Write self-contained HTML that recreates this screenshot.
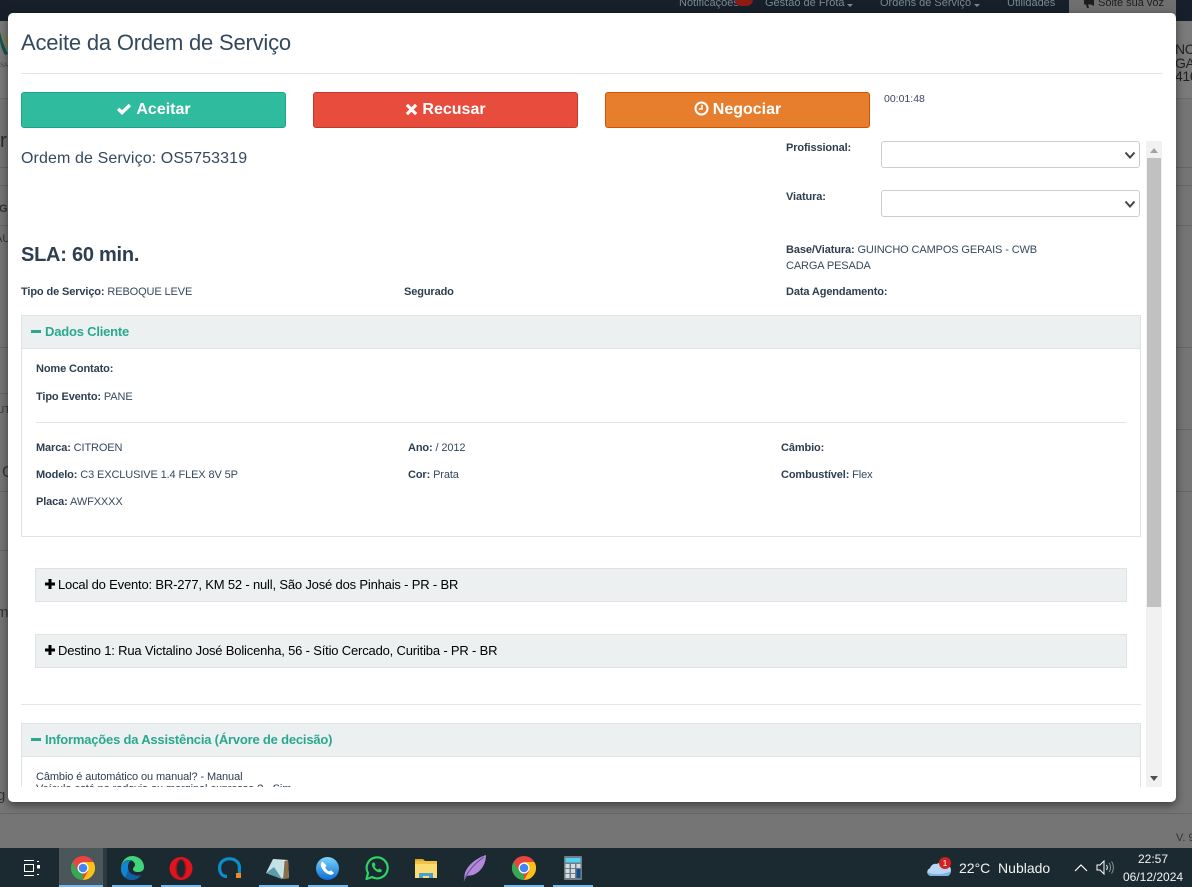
<!DOCTYPE html>
<html lang="pt"><head><meta charset="utf-8"><title>Aceite da Ordem de Serviço</title>
<style>
*{box-sizing:border-box}
html,body{margin:0;padding:0;width:1192px;height:887px;overflow:hidden;background:#757575;font-family:"Liberation Sans",sans-serif;color:#2c3e50}
.a{position:absolute;white-space:nowrap}
.t{font-size:11px;line-height:14px;color:#34495e;letter-spacing:-.12px;transform:translateY(1px)}
.t b{color:#2c3e50}
.btn{position:absolute;top:92px;height:36px;border-radius:3px;color:#fff;font-weight:bold;font-size:16px;display:flex;align-items:center;justify-content:center;gap:4px;border:1px solid}
.btn svg{transform:translateY(-1px)}
.sel{position:absolute;left:881px;width:259px;height:27px;border:1px solid #ccc;border-radius:3px;background:#fff}
.sel svg{position:absolute;right:3px;top:9px}
.ph{position:absolute;background:#ecf0f1;border:1px solid #e0e3e4}
.g{font-size:13px;font-weight:bold;color:#2aa88f;line-height:16px;letter-spacing:-.2px}
.k{font-size:13px;color:#000;line-height:16px;letter-spacing:-.18px}
.bg{position:absolute;color:#333;font-size:11px;white-space:nowrap}
.nav{position:absolute;top:-3px;font-size:11px;line-height:13px;color:#7a8690;white-space:nowrap}
.car{position:absolute;top:4px;width:0;height:0;border:3px solid transparent;border-bottom:0;border-top:3px solid #7a8690}
.line{position:absolute;height:1px;background:#676767}
.ul{position:absolute;bottom:0;height:2px;background:#76b9ed;width:35px}
.ic{position:absolute;top:853px}
</style></head><body>

<!-- background page -->
<div class="a" style="left:0;top:0;width:1192px;height:21px;background:#17202a"></div>
<div class="a" style="left:0;top:21px;width:1192px;height:77px;background:#7a7a7a"></div>
<div class="nav" style="left:679px">Notificações</div>
<div class="a" style="left:735px;top:-7px;width:18px;height:13px;border-radius:7px;background:#8c1c13"></div>
<div class="nav" style="left:765px">Gestão de Frota</div><div class="car" style="left:847px"></div>
<div class="nav" style="left:880px">Ordens de Serviço</div><div class="car" style="left:974px"></div>
<div class="nav" style="left:1007px">Utilidades</div>
<div class="a" style="left:1069px;top:0;width:107px;height:21px;background:#6f6f6f"></div>
<svg class="a" style="left:1083px;top:0" width="13" height="8" viewBox="0 0 13 8"><path d="M1 0h7l3-1v7L8 4.500H5L6 8H4L3 4.500H1z" fill="#1d1d1d"/></svg>
<div class="nav" style="left:1098px;color:#1d1d1d">Solte sua voz</div>
<svg class="a" style="left:0;top:30px" width="8" height="28" viewBox="0 0 8 28"><path d="M0 2c2 8 4 14 8 22l-3 1C2 20 0 14 0 10z" fill="#13564c"/><path d="M2 1c2 5 4 8 6 10v3C5 11 3 7 2 1z" fill="#8a7a2a"/></svg>
<div class="bg" style="left:0;top:63px;font-size:6px;color:#444">SA</div>
<div class="bg" style="left:-1px;top:203px;font-size:11px;font-weight:bold">Gr</div>
<div class="bg" style="left:-5px;top:233px">AU</div>
<div class="bg" style="left:0;top:130px;font-size:20px;color:#2a2a2a">r</div>
<div class="bg" style="left:-3px;top:405px;font-size:10px">UT</div>
<div class="bg" style="left:2px;top:464px;font-size:16px">C</div>
<div class="bg" style="left:-4px;top:604px;font-size:15px">m</div>
<div class="bg" style="left:-3px;top:787px;font-size:15px">g</div>
<div class="bg" style="left:1175px;top:43px;font-size:14px;line-height:13.500px;letter-spacing:-.4px;color:#222">NC<br>GA<br>416</div>
<div class="bg" style="left:1176px;top:832px;font-size:11px">V. 9</div>
<div class="line" style="left:0;top:98px;width:1192px;background:#6b6b6b"></div>
<div class="line" style="left:0;top:167px;width:8px"></div>
<div class="line" style="left:0;top:185px;width:8px"></div>
<div class="line" style="left:0;top:225px;width:8px"></div>
<div class="line" style="left:0;top:347px;width:8px"></div>
<div class="line" style="left:0;top:393px;width:8px"></div>
<div class="line" style="left:0;top:491px;width:8px"></div>
<div class="line" style="left:0;top:550px;width:8px"></div>
<div class="line" style="left:1176px;top:167px;width:16px"></div>
<div class="line" style="left:1176px;top:185px;width:16px"></div>
<div class="line" style="left:1176px;top:225px;width:16px"></div>
<div class="line" style="left:1176px;top:347px;width:16px"></div>
<div class="line" style="left:1176px;top:429px;width:16px"></div>
<div class="line" style="left:1176px;top:491px;width:16px"></div>
<div class="line" style="left:0;top:813px;width:1192px"></div>

<!-- modal -->
<div class="a" style="left:8px;top:13px;width:1168px;height:789px;background:#fff;border-radius:5px;box-shadow:0 3px 9px rgba(0,0,0,.5)"></div>
<div class="a" style="left:21px;top:29px;font-size:22px;line-height:28px;letter-spacing:-.2px;color:#34495e">Aceite da Ordem de Serviço</div>
<div class="a" style="left:21px;top:73px;width:1141px;height:1px;background:#e5e5e5"></div>

<div class="btn" style="left:21px;width:265px;background:#2fbc9e;border-color:#1fa488">
<svg width="16" height="13" viewBox="0 0 16 13"><path d="M1 7l2.3-2.4L6 7.3 12.7.8 15 3.2 6 12z" fill="#fff"/></svg><span>Aceitar</span></div>
<div class="btn" style="left:313px;width:265px;background:#e74c3c;border-color:#c0392b">
<svg width="13" height="13" viewBox="0 0 13 13"><path d="M3 .8L6.500 4.300 10 .8l2.200 2.200L8.700 6.500l3.500 3.500L10 12.200 6.500 8.700 3 12.200.8 10l3.500-3.500L.8 3z" fill="#fff"/></svg><span>Recusar</span></div>
<div class="btn" style="left:605px;width:265px;height:35.500px;background:#e67e2e;border-color:#d35400">
<svg width="15" height="15" viewBox="0 0 15 15"><circle cx="7.500" cy="7.500" r="6" fill="none" stroke="#fff" stroke-width="2"/><path d="M8 3.800v4.200H4.800" fill="none" stroke="#fff" stroke-width="1.600"/></svg><span>Negociar</span></div>
<div class="a t" style="left:884px;top:91px;font-size:10.500px;letter-spacing:0">00:01:48</div>

<div class="a" style="left:21px;top:150px;font-size:16px;line-height:18px;letter-spacing:.11px;color:#34495e">Ordem de Serviço: OS5753319</div>
<div class="a" style="left:21px;top:244px;font-size:20px;line-height:22px;font-weight:bold;letter-spacing:-.25px;color:#2c3e50">SLA: 60 min.</div>
<div class="a t" style="left:21px;top:284px"><b>Tipo de Serviço:</b> REBOQUE LEVE</div>
<div class="a t" style="left:404px;top:284px"><b>Segurado</b></div>
<div class="a t" style="left:786px;top:284px"><b>Data Agendamento:</b></div>

<div class="a t" style="left:786px;top:140px"><b>Profissional:</b></div>
<div class="sel" style="top:141px"><svg width="12" height="9" viewBox="0 0 12 9"><path d="M1.500 1.500L6 6.500l4.500-5" fill="none" stroke="#444" stroke-width="2"/></svg></div>
<div class="a t" style="left:786px;top:189px"><b>Viatura:</b></div>
<div class="sel" style="top:190px"><svg width="12" height="9" viewBox="0 0 12 9"><path d="M1.500 1.500L6 6.500l4.500-5" fill="none" stroke="#444" stroke-width="2"/></svg></div>
<div class="a t" style="left:786px;top:242px"><b>Base/Viatura:</b> GUINCHO CAMPOS GERAIS - CWB</div>
<div class="a t" style="left:786px;top:258px">CARGA PESADA</div>

<!-- scrollbar -->
<div class="a" style="left:1146px;top:141px;width:16px;height:646px;background:#f1f1f1"></div>
<div class="a" style="left:1147px;top:158px;width:14px;height:449px;background:#c1c1c1"></div>
<div class="a" style="left:1150px;top:148px;width:0;height:0;border:4px solid transparent;border-top:0;border-bottom:5px solid #a3a3a3"></div>
<div class="a" style="left:1150px;top:776px;width:0;height:0;border:4px solid transparent;border-bottom:0;border-top:5px solid #505050"></div>

<!-- dados cliente -->
<div class="a" style="left:21px;top:315px;width:1120px;height:222px;border:1px solid #e0e3e4"></div>
<div class="ph" style="left:21px;top:315px;width:1120px;height:34px"></div>
<div class="a" style="left:31px;top:330px;width:10px;height:3px;background:#2aa88f"></div>
<div class="a g" style="left:45px;top:324px">Dados Cliente</div>
<div class="a t" style="left:36px;top:361px"><b>Nome Contato:</b></div>
<div class="a t" style="left:36px;top:389px"><b>Tipo Evento:</b> PANE</div>
<div class="a" style="left:36px;top:422px;width:1090px;height:1px;background:#e5e5e5"></div>
<div class="a t" style="left:36px;top:440px"><b>Marca:</b> CITROEN</div>
<div class="a t" style="left:36px;top:467px"><b>Modelo:</b> C3 EXCLUSIVE 1.4 FLEX 8V 5P</div>
<div class="a t" style="left:36px;top:494px"><b>Placa:</b> AWFXXXX</div>
<div class="a t" style="left:408px;top:440px"><b>Ano:</b> / 2012</div>
<div class="a t" style="left:408px;top:467px"><b>Cor:</b> Prata</div>
<div class="a t" style="left:781px;top:440px"><b>Câmbio:</b></div>
<div class="a t" style="left:781px;top:467px"><b>Combustível:</b> Flex</div>

<div class="ph" style="left:35px;top:568px;width:1092px;height:34px"></div>
<svg class="a" style="left:45px;top:579px" width="10" height="10" viewBox="0 0 10 10"><path d="M3.500 0h3v3.500H10v3H6.500V10h-3V6.500H0v-3h3.500z" fill="#000"/></svg>
<div class="a k" style="left:58px;top:577px">Local do Evento: BR-277, KM 52 - null, São José dos Pinhais - PR - BR</div>
<div class="ph" style="left:35px;top:634px;width:1092px;height:34px"></div>
<svg class="a" style="left:45px;top:645px" width="10" height="10" viewBox="0 0 10 10"><path d="M3.500 0h3v3.500H10v3H6.500V10h-3V6.500H0v-3h3.500z" fill="#000"/></svg>
<div class="a k" style="left:58px;top:643px">Destino 1: Rua Victalino José Bolicenha, 56 - Sítio Cercado, Curitiba - PR - BR</div>

<div class="a" style="left:21px;top:704px;width:1120px;height:1px;background:#e5e5e5"></div>
<div class="ph" style="left:21px;top:723px;width:1120px;height:34px"></div>
<div class="a" style="left:31px;top:738px;width:10px;height:3px;background:#2aa88f"></div>
<div class="a g" style="left:45px;top:732px">Informações da Assistência (Árvore de decisão)</div>
<div class="a" style="left:21px;top:757px;width:1120px;height:30px;border-left:1px solid #e0e3e4;border-right:1px solid #e0e3e4"></div>
<div class="a" style="left:36px;top:771px;height:16px;overflow:hidden;font-size:11px;line-height:12px;letter-spacing:-.1px;color:#2c3e50;width:800px">Câmbio é automático ou manual? - Manual<br>Veículo está na rodovia ou marginal expressa ? - Sim</div>

<!-- taskbar -->
<div class="a" style="left:0;top:848px;width:1192px;height:39px;background:#1a2a30"></div>
<div class="a" style="left:59px;top:848px;width:44px;height:39px;background:#4a5659"></div>
<div class="a" style="left:103px;top:848px;width:4px;height:39px;background:#2d3b40"></div>
<div class="ul" style="left:59px;width:44px"></div>
<div class="ul" style="left:112px;width:40px"></div>
<div class="ul" style="left:161px;width:40px"></div>
<div class="ul" style="left:259px;width:40px"></div>
<div class="ul" style="left:308px;width:40px"></div>
<div class="ul" style="left:504px;width:40px"></div>
<div class="ul" style="left:553px;width:40px"></div>

<svg class="ic" style="left:22px;top:859px" width="20" height="18" viewBox="0 0 20 18" fill="none" stroke="#fff" stroke-width="1"><path d="M2 1.500h10M2 16.500h10M2.500 5.500h9v7h-9z"/><path d="M15 2.500h2M15 15.500h2"/><rect x="15" y="6" width="3" height="3.500" fill="#fff" stroke="none"/></svg>

<!-- chrome -->
<svg class="ic" style="left:71px;top:856px" width="24" height="24" viewBox="0 0 24 24"><circle cx="12" cy="12" r="12" fill="#e8453c"/><path d="M12 24A12 12 0 0 1 1.600 6L7 15l5 3z" fill="#34a853"/><path d="M12 6h10.400A12 12 0 0 1 12 24l5.200-9z" fill="#fbc116"/><circle cx="12" cy="12" r="5.500" fill="#fff"/><circle cx="12" cy="12" r="4.300" fill="#4285f4"/></svg>
<!-- edge -->
<svg class="ic" style="left:120px;top:856px" width="24" height="24" viewBox="0 0 24 24"><path d="M1 11C2 4 7 0 12 0c7 0 12 5 12 11 0 4-3 5-6 5-3 0-5-1-5-3 0-2 2-2 2-4 0-3-3-5-6-5C5 4 2 7 1 11z" fill="#3fd37c"/><path d="M1 11C0 18 5 24 12 24c4 0 7-2 9-5-2 1-5 1-7 0-4-1-6-4-6-8 0-3 1-5 3-7C6 4 2 7 1 11z" fill="#1384cf"/><path d="M8 11c0 5 4 9 9 9 1.500 0 3-.3 4-1-2 3-5 5-9 5-3 0-5-1-7-3 1 0 3-5 3-10z" fill="#0f5fa8"/></svg>
<!-- opera -->
<svg class="ic" style="left:169px;top:857px" width="24" height="23" viewBox="0 0 24 23"><ellipse cx="12" cy="11.500" rx="11.500" ry="11.500" fill="#e0141f"/><ellipse cx="12" cy="11.500" rx="5.500" ry="9.500" fill="#a80f18"/><ellipse cx="12" cy="11.500" rx="4" ry="8.500" fill="#1a2a30"/></svg>
<!-- a -->
<svg class="ic" style="left:218px;top:857px" width="24" height="22" viewBox="0 0 24 22"><path d="M9 19.500C4 19.500 1.600 16 1.600 10.500 1.600 5 6 1.800 11.500 1.800S21.400 5 21.400 10.500V16" fill="none" stroke="#0b8ccc" stroke-width="3.200"/><rect x="18" y="16" width="5" height="5" fill="#f08a24"/></svg>
<!-- notepad -->
<svg class="ic" style="left:266px;top:858px" width="25" height="22" viewBox="0 0 25 22"><path d="M7 1l15 1 1 18-6 1z" fill="#e4eef0"/><path d="M7 1L0 15l16 6 2-18z" fill="#c4e2e6"/><path d="M0 15l8-6 8 12z" fill="#5a9aaa"/><path d="M18.500 3l3.500-1 1 18-6 1z" fill="#8a6f4a"/></svg>
<!-- phone -->
<svg class="ic" style="left:316px;top:857px" width="23" height="23" viewBox="0 0 23 23"><defs><linearGradient id="ph" x1="0" y1="0" x2="0" y2="1"><stop offset="0" stop-color="#7fd4fa"/><stop offset="1" stop-color="#0a6fd8"/></linearGradient></defs><circle cx="11.500" cy="11.500" r="11.500" fill="url(#ph)"/><path d="M6.500 4.500c-1.500 1-2 2.500-1.500 4.500 1.200 4 4.500 7.500 8.500 8.500 2 .5 3.500 0 4.500-1.500l-3-2.800-2 1.200c-1.700-.8-3-2.200-3.800-4l1.300-1.900z" fill="#fff"/></svg>
<!-- whatsapp -->
<svg class="ic" style="left:365px;top:856px" width="24" height="24" viewBox="0 0 24 24"><path d="M1.500 23l1.500-6A10.500 10.500 0 1 1 7 21z" fill="none" stroke="#2ed267" stroke-width="2.200" stroke-linejoin="round"/><path d="M8 6.500c-1 .8-1.300 2-1 3.200 1 3 3.500 5.500 6.500 6.500 1.300.3 2.500 0 3.200-1v-1.500l-2.500-1.200-1.200 1.200c-1.500-.6-2.800-1.800-3.500-3.300l1-1.200L9.500 6.500z" fill="#2ed267"/></svg>
<!-- folder -->
<svg class="ic" style="left:415px;top:858px" width="22" height="20" viewBox="0 0 22 20"><path d="M0 1h8l2 2H0z" fill="#e0a82e"/><rect x="0" y="3" width="22" height="17" fill="#fbdc70"/><rect x="0" y="3" width="22" height="3" fill="#f0c345"/><path d="M4 20v-5h14v5h-4v-2H8v2z" fill="#4a9ed8"/></svg>
<!-- feather -->
<svg class="ic" style="left:463px;top:855px" width="24" height="26" viewBox="0 0 24 26"><path d="M1 26l.5-6C3 12 11 4 23 0c0 9-5 17-13 20l-6 1z" fill="#b08ad8"/><path d="M1 26c3-9 10-17 20-24" stroke="#6a4a92" stroke-width="1" fill="none"/></svg>
<!-- chrome 2 -->
<svg class="ic" style="left:512px;top:856px" width="24" height="24" viewBox="0 0 24 24"><circle cx="12" cy="12" r="12" fill="#e8453c"/><path d="M12 24A12 12 0 0 1 1.600 6L7 15l5 3z" fill="#34a853"/><path d="M12 6h10.400A12 12 0 0 1 12 24l5.200-9z" fill="#fbc116"/><circle cx="12" cy="12" r="5.500" fill="#fff"/><circle cx="12" cy="12" r="4.300" fill="#4285f4"/></svg>
<!-- calc -->
<svg class="ic" style="left:564px;top:856px" width="18" height="24" viewBox="0 0 18 24"><rect width="18" height="24" rx="1" fill="#6f7d86"/><rect x="1.500" y="2" width="15" height="4.500" fill="#54d0f0"/><g fill="#d6dde0"><rect x="1.500" y="8" width="4" height="4"/><rect x="7" y="8" width="4" height="4"/><rect x="12.500" y="8" width="4" height="4"/><rect x="1.500" y="13" width="4" height="4"/><rect x="7" y="13" width="4" height="4"/><rect x="1.500" y="18" width="4" height="4"/><rect x="7" y="18" width="4" height="4"/></g><rect x="12.500" y="13" width="4" height="9" fill="#14508c"/></svg>

<!-- tray -->
<svg class="a" style="left:926px;top:856px" width="26" height="22" viewBox="0 0 26 22"><path d="M5 20a4 4 0 0 1-1-7.800C5 9 8 7 11 8c2-2 7-2 9 1 3 0 5 2 5 5.500 0 3-2 5.500-4 5.500z" fill="#b9d7f5"/><path d="M1 16c5 3 17 3 24-1-.500 3-2 5-4 5H5c-2 0-3.500-2-4-4z" fill="#7fb0e6"/><circle cx="19" cy="7" r="6" fill="#d1201f"/><text x="19" y="10" font-size="8.500" fill="#fff" text-anchor="middle" font-family="Liberation Sans, sans-serif">1</text></svg>
<div class="a" style="left:959px;top:860px;font-size:14px;line-height:16px;color:#f2f2f2">22°C&nbsp; Nublado</div>
<svg class="a" style="left:1074px;top:863px" width="14" height="9" viewBox="0 0 14 9"><path d="M1 8l6-6 6 6" fill="none" stroke="#fff" stroke-width="1.200"/></svg>
<svg class="a" style="left:1096px;top:860px" width="18" height="15" viewBox="0 0 18 15"><path d="M1 5h3l4-4v13l-4-4H1z" fill="none" stroke="#fff" stroke-width="1"/><path d="M10.500 5c1 1.500 1 3.500 0 5" fill="none" stroke="#fff"/><path d="M13 3c2 2.500 2 6.500 0 9M15.500 1.500c2.500 3.500 2.500 8.500 0 12" fill="none" stroke="#8a9598"/></svg>
<div class="a" style="left:1138px;top:851px;font-size:12px;line-height:16px;color:#f2f2f2">22:57</div>
<div class="a" style="left:1123px;top:869px;font-size:12px;line-height:16px;color:#f2f2f2">06/12/2024</div>
</body></html>
